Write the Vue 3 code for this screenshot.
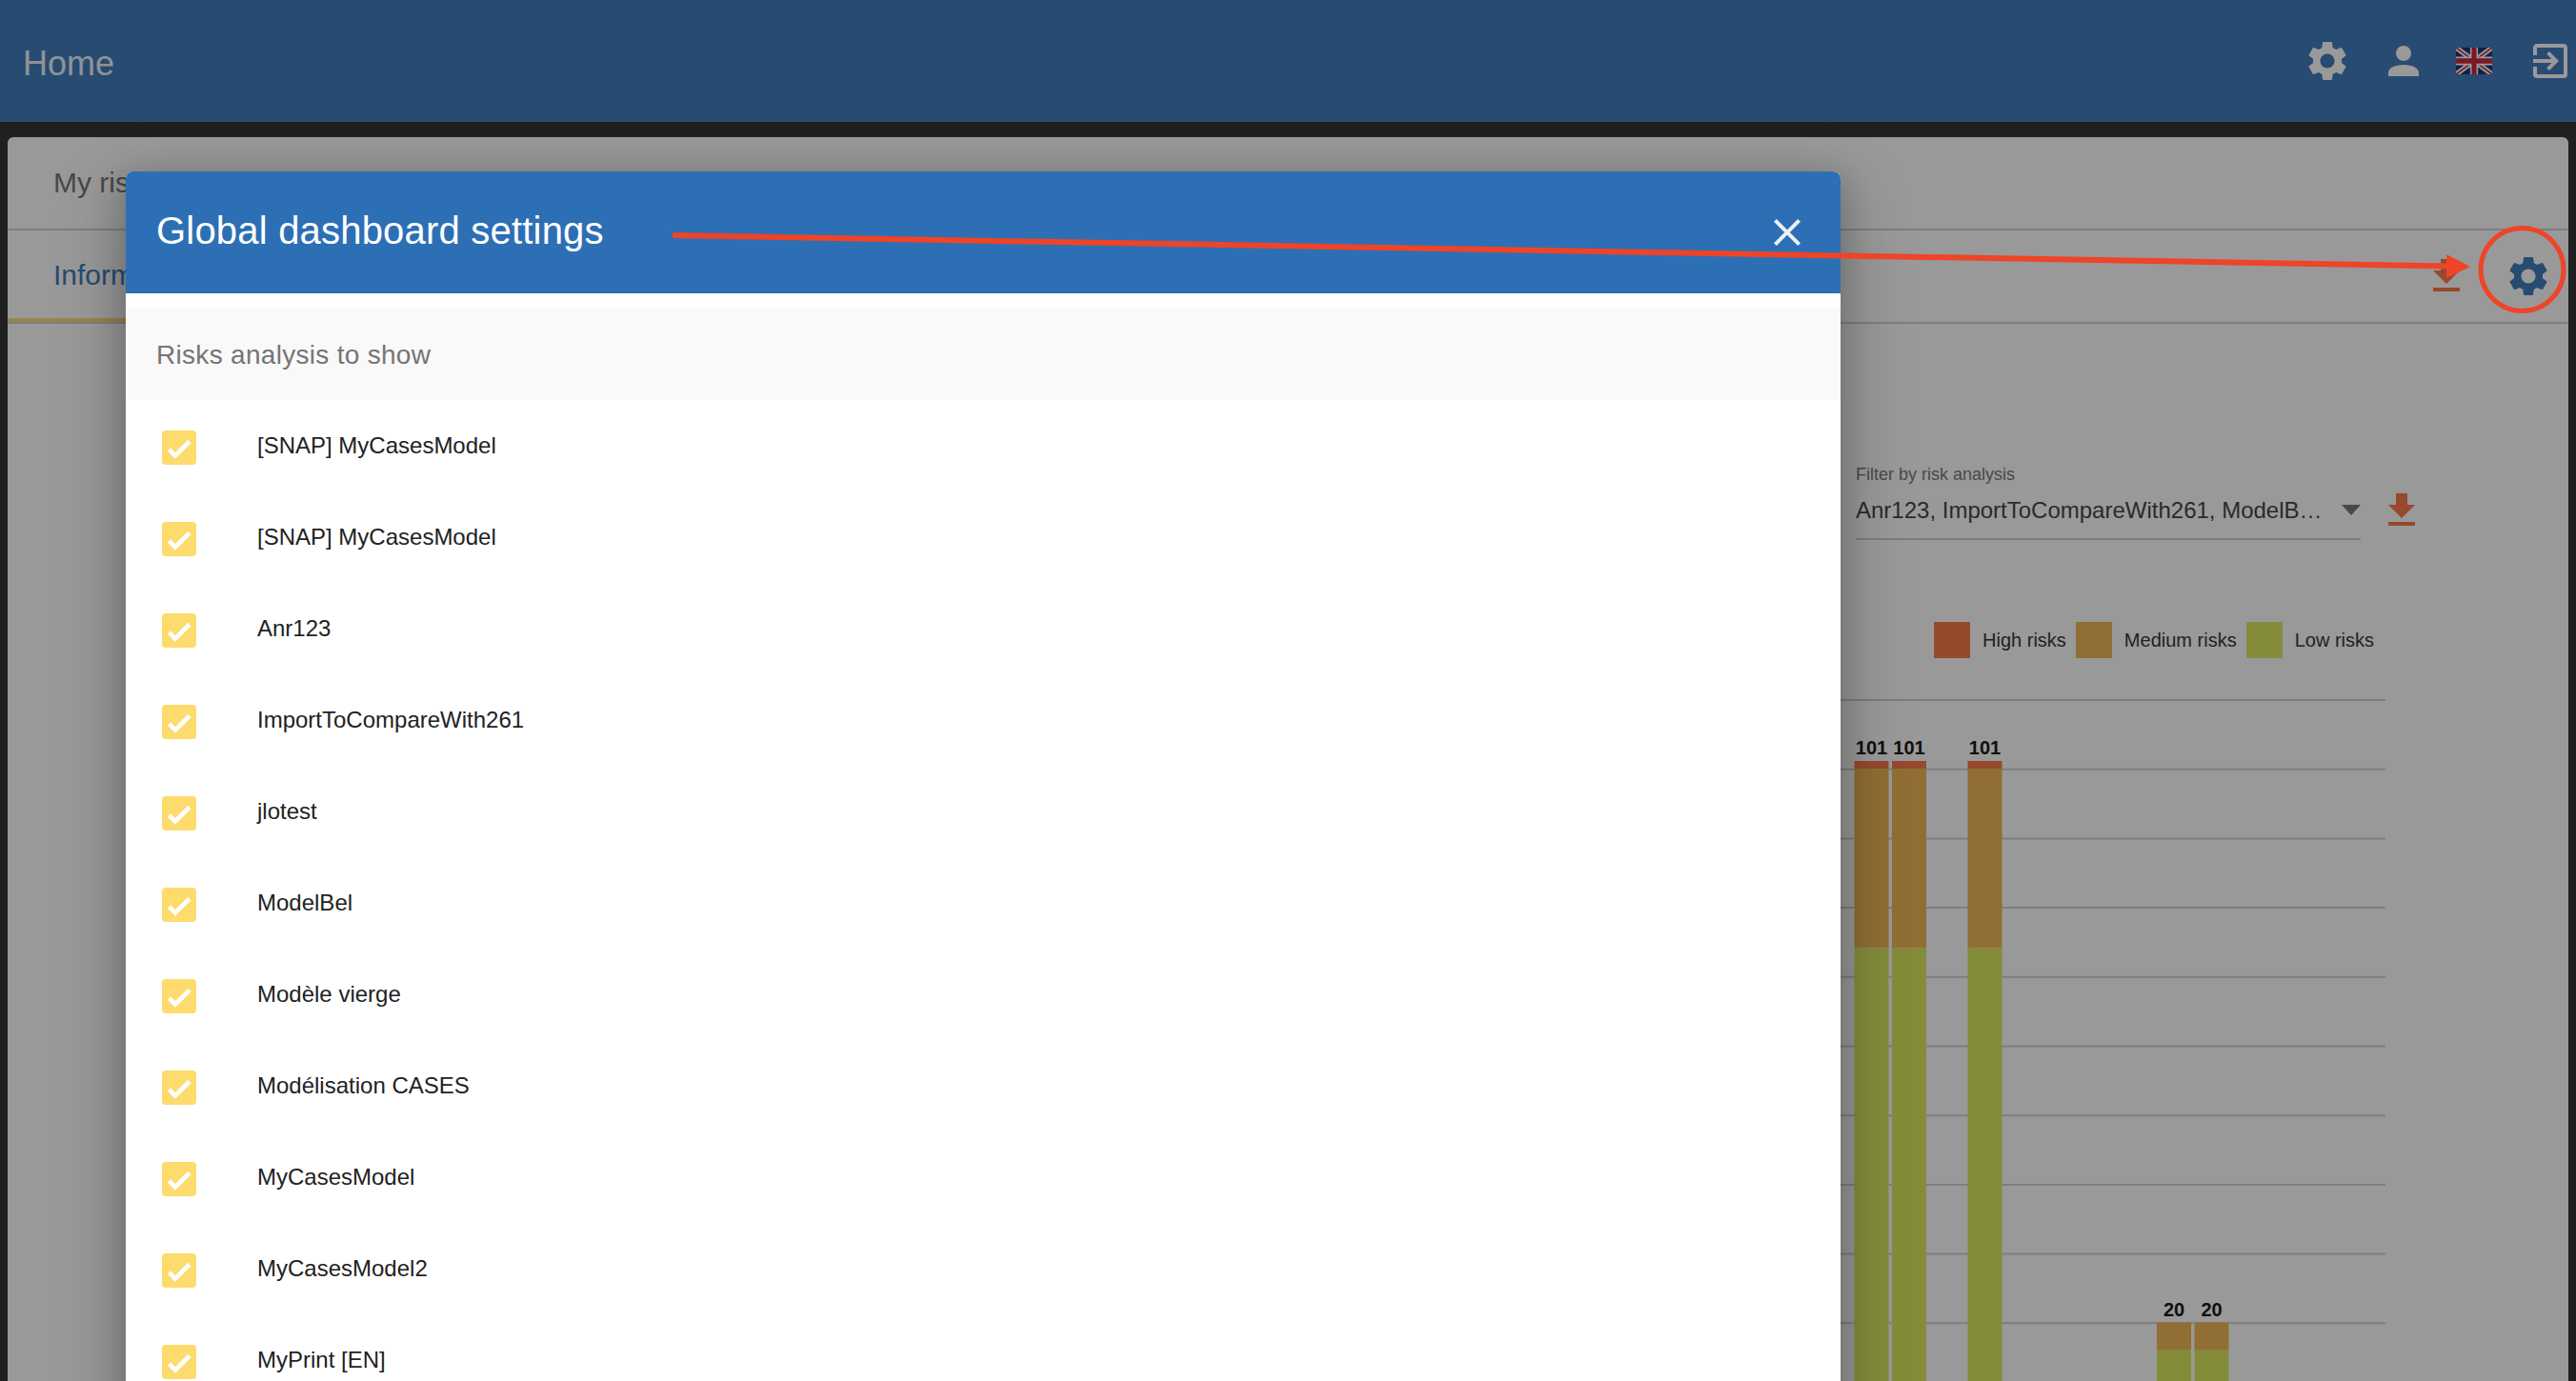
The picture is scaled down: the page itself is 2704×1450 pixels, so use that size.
<template>
  <div class="page">
    <header class="topbar">
      <span class="home">Home</span>
      <div class="top-icons">
        <svg class="ic gear-top" viewBox="0 0 24 24"><path :d="gearPath" /></svg>
        <svg class="ic person" viewBox="0 0 24 24"><path d="M12,4A4,4 0 0,1 16,8A4,4 0 0,1 12,12A4,4 0 0,1 8,8A4,4 0 0,1 12,4M12,14C16.42,14 20,15.79 20,18V20H4V18C4,15.79 7.58,14 12,14Z" /></svg>
        <svg class="flag" viewBox="0 0 60 40" preserveAspectRatio="none">
          <rect width="60" height="40" fill="#012169" />
          <path d="M0,0 L60,40 M60,0 L0,40" stroke="#fff" stroke-width="8" />
          <path d="M0,0 L60,40 M60,0 L0,40" stroke="#c8102e" stroke-width="2.6" />
          <path d="M30,0 V40 M0,20 H60" stroke="#fff" stroke-width="13" />
          <path d="M30,0 V40 M0,20 H60" stroke="#c8102e" stroke-width="8" />
        </svg>
        <svg class="ic exit" viewBox="0 0 24 24"><path d="M10.09,15.59L11.5,17L16.5,12L11.5,7L10.09,8.41L12.67,11H3V13H12.67L10.09,15.59M19,3H5C3.89,3 3,3.9 3,5V9H5V5H19V19H5V15H3V19A2,2 0 0,0 5,21H19A2,2 0 0,0 21,19V5C21,3.9 20.1,3 19,3Z" /></svg>
      </div>
    </header>

    <main class="card">
      <div class="tabs tabs-main">
        <span class="tab-label">My risks analysis</span>
      </div>
      <div class="tabs tabs-sub">
        <span class="tab-active">Information risks</span>
        <div class="tab-actions">
          <svg class="ic dl" viewBox="0 0 24 24"><path :d="downloadPath" /></svg>
          <svg class="ic gear-card" viewBox="0 0 24 24"><path :d="gearPath" /></svg>
        </div>
      </div>

      <div class="content">
        <div class="filter">
          <div class="select">
            <div class="select-label">Filter by risk analysis</div>
            <div class="select-value">
              <span>Anr123, ImportToCompareWith261, ModelB…</span>
              <i class="caret"></i>
            </div>
          </div>
          <svg class="ic dl dl-filter" viewBox="0 0 24 24"><path :d="downloadPath" /></svg>
        </div>

        <div class="legend">
          <template v-for="l in legend" :key="l.label">
            <i class="swatch" :class="l.cls"></i>
            <span class="legend-text">{{ l.label }}</span>
          </template>
        </div>

        <svg class="chart" viewBox="1000 734 1504 716">
          <line v-for="y in gridLines" :key="y" x1="1000" x2="2504" :y1="y" :y2="y" stroke="#cdcdcd" stroke-width="2" />
          <g v-for="b in bars" :key="b.x">
            <rect v-if="b.high" :x="b.x" :y="b.top" width="36" :height="b.high" fill="#fa6b37" />
            <rect :x="b.x" :y="b.top + b.high" width="36" :height="b.med" fill="#efb045" />
            <rect :x="b.x" :y="b.top + b.high + b.med" width="36" :height="1450 - b.top - b.high - b.med" fill="#d9e751" />
            <text :x="b.x + 18" :y="b.top - 7" text-anchor="middle" class="bar-num">{{ b.value }}</text>
          </g>
        </svg>
      </div>
    </main>

    <div class="scrim"></div>

    <section class="dialog">
      <div class="dialog-head">
        <span class="dialog-title">Global dashboard settings</span>
        <svg class="ic close" viewBox="0 0 24 24"><path d="M19,6.41L17.59,5L12,10.59L6.41,5L5,6.41L10.59,12L5,17.59L6.41,19L12,13.41L17.59,19L19,17.59L13.41,12L19,6.41Z" /></svg>
      </div>
      <div class="dialog-body">
        <div class="section">Risks analysis to show</div>
        <div v-for="(name, i) in analyses" :key="i" class="row">
          <span class="check">
            <svg viewBox="0 0 36 36"><path d="M7.5 20 14 26.5 29 11.5" fill="none" stroke="#fff" stroke-width="4.6" /></svg>
          </span>
          <span class="row-name">{{ name }}</span>
        </div>
      </div>
    </section>

    <!-- annotation drawn on top of the screenshot -->
    <svg class="annot" viewBox="0 0 2704 1450">
      <line x1="706" y1="247" x2="2572" y2="279.5" stroke="#ee4427" stroke-width="6" />
      <polygon points="2568,267 2593,280 2568,292" fill="#ee4427" />
      <circle cx="2647.5" cy="283" r="43.5" fill="none" stroke="#ee4427" stroke-width="5" />
    </svg>
  </div>
</template>

<script setup>
const gearPath =
  "M19.14,12.94c0.04-0.3,0.06-0.61,0.06-0.94c0-0.32-0.02-0.64-0.07-0.94l2.03-1.58c0.18-0.14,0.23-0.41,0.12-0.61l-1.92-3.32c-0.12-0.22-0.37-0.29-0.59-0.22l-2.39,0.96c-0.5-0.38-1.03-0.7-1.62-0.94L14.4,2.81c-0.04-0.24-0.24-0.41-0.48-0.41h-3.84c-0.24,0-0.43,0.17-0.47,0.41L9.25,5.35C8.66,5.59,8.12,5.92,7.63,6.29L5.24,5.33c-0.22-0.08-0.47,0-0.59,0.22L2.74,8.87C2.62,9.08,2.66,9.34,2.86,9.48l2.03,1.58C4.84,11.36,4.8,11.69,4.8,12s0.02,0.64,0.07,0.94l-2.03,1.58c-0.18,0.14-0.23,0.41-0.12,0.61l1.92,3.32c0.12,0.22,0.37,0.29,0.59,0.22l2.39-0.96c0.5,0.38,1.03,0.7,1.62,0.94l0.36,2.54c0.05,0.24,0.24,0.41,0.48,0.41h3.84c0.24,0,0.44-0.17,0.47-0.41l0.36-2.54c0.59-0.24,1.13-0.56,1.62-0.94l2.39,0.96c0.22,0.08,0.47,0,0.59-0.22l1.92-3.32c0.12-0.22,0.07-0.47-0.12-0.61L19.14,12.94z M12,15.6c-1.98,0-3.6-1.62-3.6-3.6s1.62-3.6,3.6-3.6s3.6,1.62,3.6,3.6S13.98,15.6,12,15.6z";
const downloadPath = "M5,20H19V18H5M19,9H15V3H9V9H5L12,16L19,9Z";

const analyses = [
  "[SNAP] MyCasesModel",
  "[SNAP] MyCasesModel",
  "Anr123",
  "ImportToCompareWith261",
  "jlotest",
  "ModelBel",
  "Modèle vierge",
  "Modélisation CASES",
  "MyCasesModel",
  "MyCasesModel2",
  "MyPrint [EN]",
];

const legend = [
  { label: "High risks", cls: "high" },
  { label: "Medium risks", cls: "medium" },
  { label: "Low risks", cls: "low" },
];

const gridLines = Array.from({ length: 10 }, (_, i) => 735 + i * 72.7);

const bars = [
  { x: 1946.5, top: 799, high: 8, med: 188.5, value: 101 },
  { x: 1986, top: 799, high: 8, med: 188.5, value: 101 },
  { x: 2065.5, top: 799, high: 8, med: 188.5, value: 101 },
  { x: 2264, top: 1388.5, high: 0, med: 28.5, value: 20 },
  { x: 2303.5, top: 1388.5, high: 0, med: 28.5, value: 20 },
];
</script>

<style>
body { margin: 0; }
</style>

<style scoped>
.page { position: relative; width: 2704px; height: 1450px; overflow: hidden; background: #212121; font-family: "Liberation Sans", Arial, sans-serif; display: flex; flex-direction: column; }
.ic { display: block; width: 48px; height: 48px; fill: #fff; flex: none; }

.topbar { flex: none; height: 128px; box-sizing: border-box; background: #2d6fb5; display: flex; align-items: center; justify-content: space-between; padding: 0 3px 0 24px; }
.home { font-size: 36px; color: #fff; opacity: .92; margin-top: 5px; }
.top-icons { display: flex; align-items: center; }
.gear-top { width: 50px; height: 50px; }
.person { margin-left: 31px; }
.flag { width: 38px; height: 28px; margin-left: 31px; }
.exit { margin-left: 37px; }

.card { flex: 1; min-height: 0; margin: 16px 8px 0; background: #fff; border-radius: 6px 6px 0 0; display: flex; flex-direction: column; }
.tabs { flex: none; box-sizing: border-box; display: flex; align-items: center; border-bottom: 2px solid #cdcdcd; }
.tabs-main { height: 98px; padding-left: 48px; font-size: 30px; color: #6a6a6a; }
.tabs-sub { height: 98px; justify-content: space-between; }
.tab-active { box-sizing: border-box; width: 400px; height: 96px; display: flex; align-items: center; padding: 2px 0 0 48px; font-size: 30px; color: #2d6fb5; border-bottom: 4px solid #fddb6d; }
.tab-actions { display: flex; align-items: center; padding-right: 17px; }
.dl { fill: #fa6b37; }
.gear-card { width: 50px; height: 50px; margin-left: 37px; fill: #2d6fb5; }

.content { flex: 1; min-height: 0; display: flex; flex-direction: column; align-items: flex-end; padding-right: 192px; }
.filter { display: flex; align-items: flex-end; margin-top: 147px; margin-right: -41px; }
.select { width: 530px; border-bottom: 2px solid #cdcdcd; }
.select-label { font-size: 18px; line-height: 22px; color: #6a6a6a; }
.select-value { display: flex; align-items: center; justify-content: space-between; height: 56px; font-size: 24px; color: #333; padding-bottom: 3px; box-sizing: border-box; }
.caret { width: 0; height: 0; border-left: 10px solid transparent; border-right: 10px solid transparent; border-top: 11px solid #6a6a6a; }
.dl-filter { margin-left: 19px; margin-bottom: 7px; }

.legend { display: flex; align-items: center; margin-top: 86px; padding-right: 2px; height: 38px; }
.swatch { width: 38px; height: 38px; flex: none; }
.swatch.high { background: #fa6b37; }
.swatch.medium { background: #efb045; }
.swatch.low { background: #d9e751; }
.legend-text { font-size: 20px; color: #222; margin: 0 10px 0 13px; }

.chart { flex: none; width: 1504px; height: 716px; margin-top: 43px; display: block; }
.bar-num { font-size: 20px; font-weight: 700; fill: #000; }

.scrim { position: absolute; inset: 0; background: rgba(33, 33, 33, .46); }

.dialog { position: absolute; left: 132px; top: 180px; width: 1800px; height: 1400px; background: #fff; border-radius: 8px 8px 0 0; box-shadow: 0 22px 70px 8px rgba(0, 0, 0, .2), 0 8px 30px 6px rgba(0, 0, 0, .14); }
.dialog-head { height: 128px; box-sizing: border-box; background: #2d6fb5; border-radius: 8px 8px 0 0; display: flex; align-items: center; justify-content: space-between; padding: 0 32px; }
.dialog-title { font-size: 40px; letter-spacing: .2px; color: #fff; margin-top: -3px; }
.close { fill: #fff; opacity: .9; }
.dialog-body { padding-top: 16px; }
.section { height: 96px; box-sizing: border-box; padding: 1px 0 0 32px; display: flex; align-items: center; background: #f9f9f9; font-size: 28px; letter-spacing: .3px; color: #757575; }
.row { height: 96px; display: flex; align-items: center; padding-left: 38px; }
.check { width: 36px; height: 36px; margin-top: 4px; flex: none; border-radius: 4px; background: #fddb6d; }
.check svg { display: block; width: 36px; height: 36px; }
.row-name { font-size: 24px; color: #222; margin-left: 64px; }

.annot { position: absolute; inset: 0; width: 2704px; height: 1450px; pointer-events: none; }
</style>
